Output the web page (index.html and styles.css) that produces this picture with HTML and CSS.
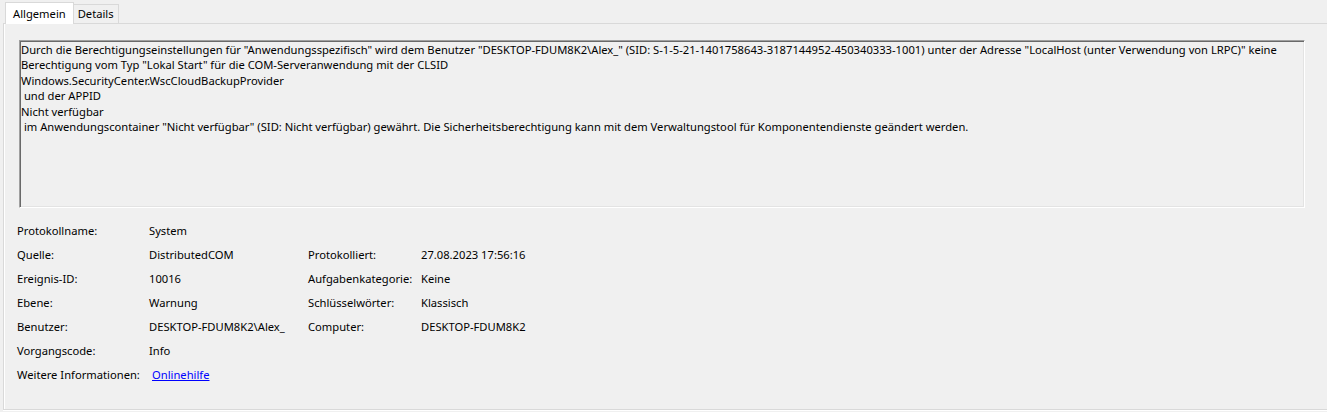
FILE: index.html
```html
<!DOCTYPE html>
<html lang="de">
<head>
  <meta charset="UTF-8" />
  <title>Ereigniseigenschaften</title>
  <link rel="stylesheet" href="styles.css">
</head>
<body>

  <div class="tabs">
    <div class="tab active">Allgemein</div>
    <div class="tab">Details</div>
  </div>

  <div class="panel">
    <div class="message">Durch die Berechtigungseinstellungen für "Anwendungsspezifisch" wird dem Benutzer "DESKTOP-FDUM8K2\Alex_" (SID: S-1-5-21-1401758643-3187144952-450340333-1001) unter der Adresse "LocalHost (unter Verwendung von LRPC)" keine
Berechtigung vom Typ "Lokal Start" für die COM-Serveranwendung mit der CLSID
Windows.SecurityCenter.WscCloudBackupProvider
 und der APPID
Nicht verfügbar
 im Anwendungscontainer "Nicht verfügbar" (SID: Nicht verfügbar) gewährt. Die Sicherheitsberechtigung kann mit dem Verwaltungstool für Komponentendienste geändert werden.</div>

    <div class="props">
      <div>Protokollname:</div><div>System</div><div></div><div></div>
      <div>Quelle:</div><div>DistributedCOM</div><div>Protokolliert:</div><div>27.08.2023 17:56:16</div>
      <div>Ereignis-ID:</div><div>10016</div><div>Aufgabenkategorie:</div><div>Keine</div>
      <div>Ebene:</div><div>Warnung</div><div>Schlüsselwörter:</div><div>Klassisch</div>
      <div>Benutzer:</div><div>DESKTOP-FDUM8K2\Alex_</div><div>Computer:</div><div>DESKTOP-FDUM8K2</div>
      <div>Vorgangscode:</div><div>Info</div><div></div><div></div>
      <div>Weitere Informationen:</div><div><a class="link" href="#">Onlinehilfe</a></div><div></div><div></div>
    </div>
  </div>

</body>
</html>
```

FILE: styles.css
```css
body {
  margin: 0;
  background: #f0f0f0;
  color: #000;
  font-family: "Noto Sans", "Segoe UI", sans-serif;
  font-size: 11.2px;
  overflow: hidden;
  height: 412px;
}

.tabs {
  display: flex;
  align-items: flex-end;
  height: 23px;
  padding-left: 5px;
}

.tab {
  height: 18px;
  line-height: 18px;
  padding: 0 4px;
  border: 1px solid #d9d9d9;
  border-bottom: none;
  border-left: none;
}

.tab.active {
  position: relative;
  z-index: 1;
  height: 21px;
  line-height: 22px;
  padding: 0 7px;
  margin-bottom: -1px;
  background: #fff;
  border-left: 1px solid #d9d9d9;
}

.panel {
  margin-left: 3px;
  width: 1340px;
  height: 385px;
  border: 1px solid #d9d9d9;
  box-shadow: inset 1px 0 #fff, 0 1px #fff;
}

.message {
  margin: 16px 0 0 15px;
  width: 1283px;
  height: 165px;
  padding: 1px 0 0 1px;
  border: 1px solid;
  border-color: #a0a0a0 #fff #fff #a0a0a0;
  box-shadow: inset 1px 1px #696969, inset -1px -1px #e3e3e3;
  white-space: pre;
  line-height: 15.4px;
  overflow: hidden;
}

.props {
  display: grid;
  grid-template-columns: 132px 159px 113px auto;
  grid-auto-rows: 24px;
  align-items: center;
  margin: 10px 0 0 13px;
}

.link {
  margin-left: 3px;
  color: #0000ff;
}
```
